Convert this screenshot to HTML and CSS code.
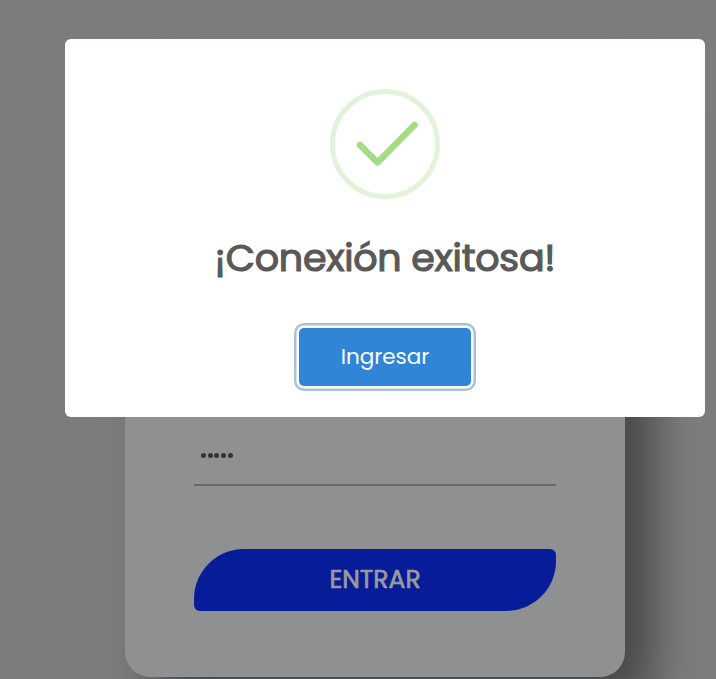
FILE: index.html
```html
<!DOCTYPE html>
<html lang="es">
<head>
<meta charset="utf-8">
<title>Conexión</title>
<link rel="stylesheet" href="styles.css">
</head>
<body>
<main class="page">
  <form class="card">
    <div class="field"><span class="dots"><i></i><i></i><i></i><i></i><i></i></span></div>
    <button type="button" class="enter"><span>ENTRAR</span></button>
  </form>
</main>
<section class="modal" role="dialog" aria-modal="true">
  <svg class="success" viewBox="0 0 110 110" fill="none">
    <circle cx="55" cy="55" r="52.5" stroke="#e2f3d9" stroke-width="5"/>
    <path d="M30 56 47.5 73.5 84.5 36" stroke="#a5dc86" stroke-width="6.5" stroke-linecap="round" stroke-linejoin="round"/>
  </svg>
  <h2 class="title"><span>¡Conexión exitosa!</span></h2>
  <button type="button" class="confirm"><span>Ingresar</span></button>
</section>
</body>
</html>
```
FILE: styles.css
```css
* { box-sizing: border-box; }
body {
  margin: 0;
  height: 679px;
  overflow: hidden;
  background: #7f7c7d;
  font-family: Poppins, Inter, sans-serif;
}
button { font-family: inherit; border: 0; padding: 0; }
.page { height: 679px; overflow: hidden; padding: 60px 91px 2px 125px; }
.card {
  height: 617px;
  padding: 365px 69px 0;
  background: #8e9092;
  border-radius: 25px;
  box-shadow: 28px 28px 45px #484848;
}
.field {
  height: 61px;
  padding: 28px 7px 0;
  border-bottom: 2px solid #67696b;
}
.dots { display: flex; gap: 1.7px; }
.dots i { width: 5px; height: 5px; border-radius: 50%; background: #333436; }
.enter {
  display: block;
  width: 362px;
  height: 62px;
  margin-top: 63px;
  border-radius: 50px 6px 50px 6px;
  background: #061c99;
  color: #999a9c;
  font-size: 25px;
  font-weight: 400;
  -webkit-text-stroke: .7px #999a9c;
}
.modal {
  position: absolute;
  left: 65px;
  top: 39px;
  width: 640px;
  height: 378px;
  display: flex;
  flex-direction: column;
  align-items: center;
  padding-top: 50px;
  border-radius: 6px;
  background: #fff;
}
.success { width: 110px; height: 110px; flex: none; }
.title {
  margin: 29px 0 0;
  height: 60px;
  line-height: 60px;
  color: #595959;
  font-size: 38px;
  font-weight: 400;
  letter-spacing: -.25px;
  -webkit-text-stroke: 1.2px #595959;
  white-space: nowrap;
}
.confirm {
  width: 172px;
  height: 58px;
  margin-top: 40px;
  padding-bottom: 1px;
  border-radius: 5px;
  background: #3085d6;
  color: #fff;
  font-size: 21.5px;
  box-shadow: 0 0 0 2.5px #fff, 0 0 0 5px #abc1da;
}
```
